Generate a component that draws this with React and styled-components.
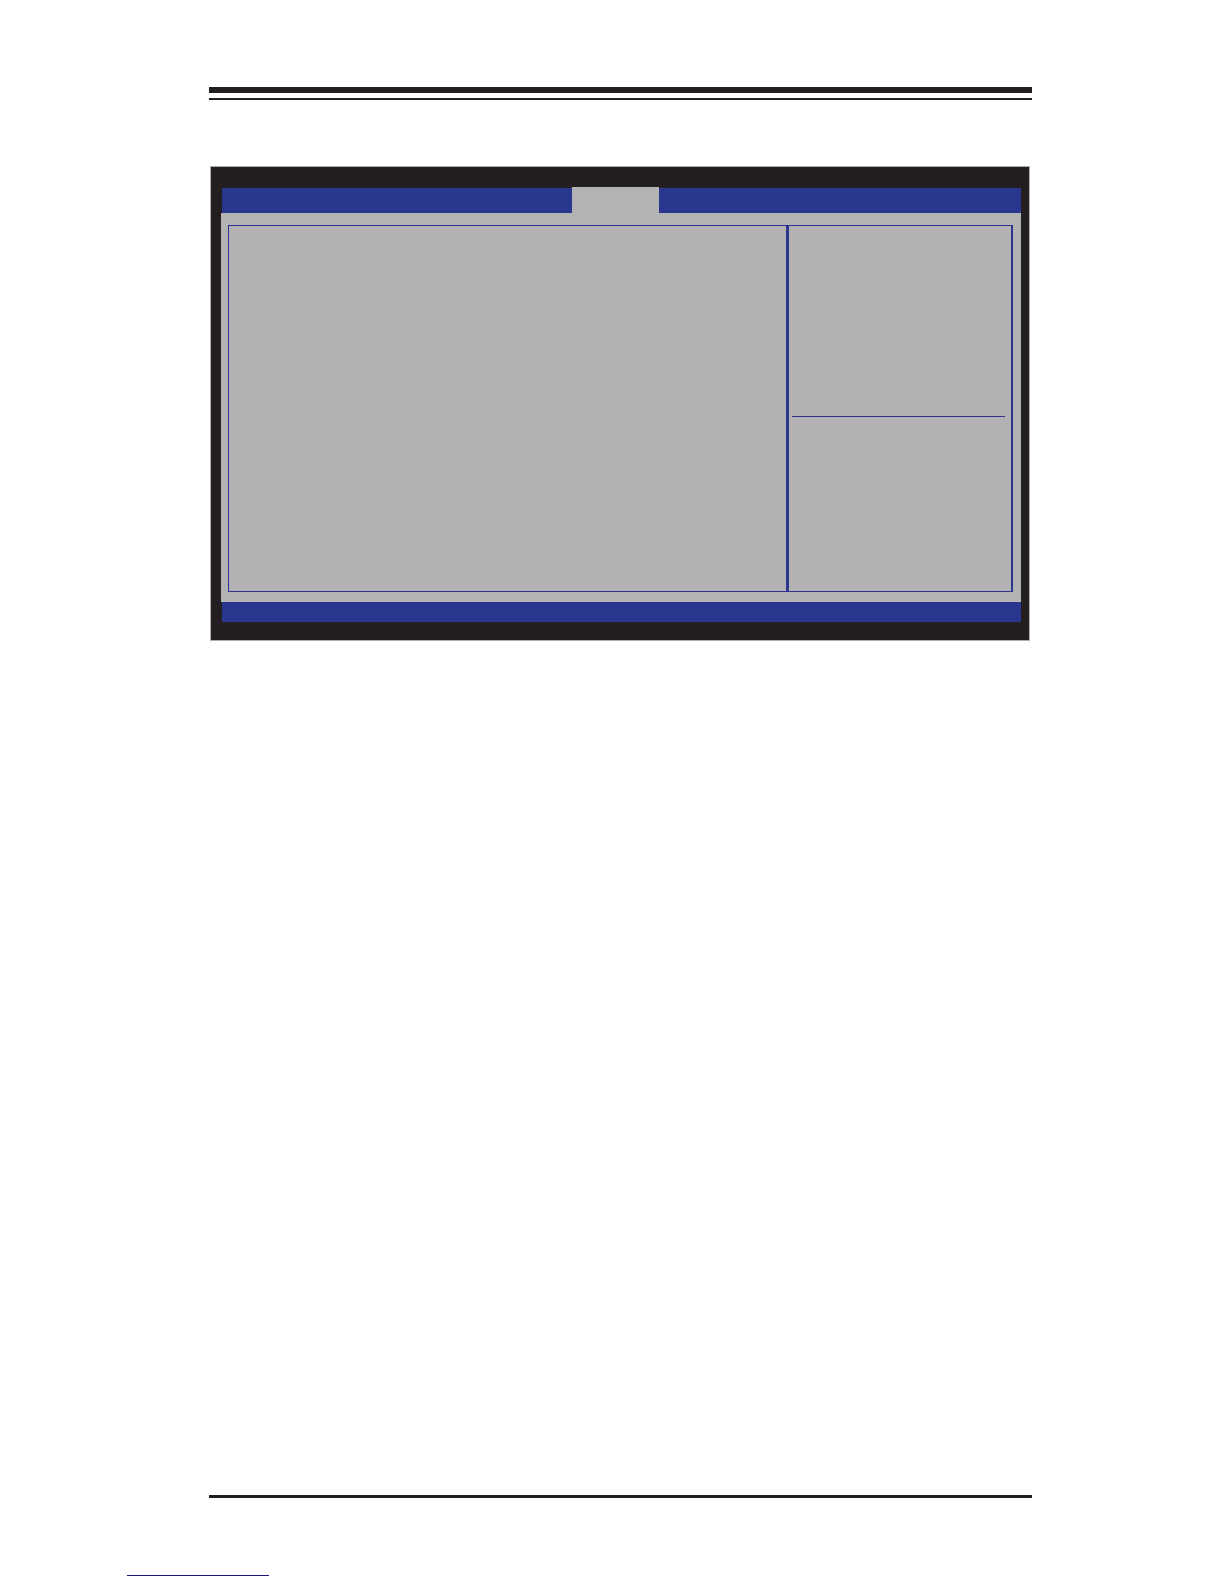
import React from 'react';
import styled, { createGlobalStyle } from 'styled-components';

const GlobalStyle = createGlobalStyle`
  * {
    box-sizing: border-box;
  }

  body {
    margin: 0;
    background-color: #fff;
    font-family: "Liberation Sans", Arial, sans-serif;
  }
`;

const Page = styled.div`
  display: flex;
  flex-direction: column;
  min-height: 100vh;
  padding: 87px 0 8px;
`;

const Sheet = styled.main`
  flex: 1;
  display: flex;
  flex-direction: column;
  margin: 0 192px 0 209px;
`;

const HeaderRule = styled.header`
  height: 13px;
  border-top: 6px solid #231f20;
  border-bottom: 2px solid #231f20;
`;

const FooterRule = styled.footer`
  height: 3px;
  margin-top: auto;
  background-color: #231f20;
`;

const LinkRule = styled.div`
  width: 142px;
  height: 1px;
  margin: 77px 0 0 127px;
  background-color: #1a1a80;
`;

const Screen = styled.section`
  margin: 66px 2px 0 1px;
  padding: 20px 8px 18px 10px;
  border: 1px solid #b0aeae;
  background-color: #231f20;
`;

const MenuBar = styled.nav`
  display: grid;
  grid-template-columns: 350fr 87fr 362fr;
  align-items: end;
  height: 26px;
  margin-left: 1px;
`;

const MenuSpace = styled.div`
  height: 25px;
  background-color: #2a378f;
`;

const ActiveTab = styled.button`
  height: 26px;
  padding: 0;
  border: none;
  background-color: #b3b3b3;
`;

const Body = styled.div`
  padding: 12px 8px 10px 7px;
  background-color: #b3b3b3;
`;

const Panel = styled.div`
  display: grid;
  grid-template-columns: 557fr 225fr;
  border: 1px solid #2e3192;
  border-right: 2px solid #2a378f;
  background-color: #b1b2b1;
`;

const Options = styled.div``;

const Side = styled.aside`
  border-left: 3px solid #2a378f;
`;

const Help = styled.div`
  min-height: 191px;
  margin: 0 6px 0 3px;
  border-bottom: 1px solid #2e3192;
`;

const Keys = styled.div`
  min-height: 174px;
`;

const StatusBar = styled.div`
  height: 20px;
  margin-left: 1px;
  background-color: #2a378f;
`;

const SetupScreen = () => {
  return (
    <Screen>
      <MenuBar>
        <MenuSpace />
        <ActiveTab type="button" aria-label="Active tab" />
        <MenuSpace />
      </MenuBar>
      <Body>
        <Panel>
          <Options />
          <Side>
            <Help />
            <Keys />
          </Side>
        </Panel>
      </Body>
      <StatusBar />
    </Screen>
  );
};

const App = () => {
  return (
    <>
      <GlobalStyle />
      <Page>
        <Sheet>
          <HeaderRule />
          <SetupScreen />
          <FooterRule />
        </Sheet>
        <LinkRule />
      </Page>
    </>
  );
};

export default App;
